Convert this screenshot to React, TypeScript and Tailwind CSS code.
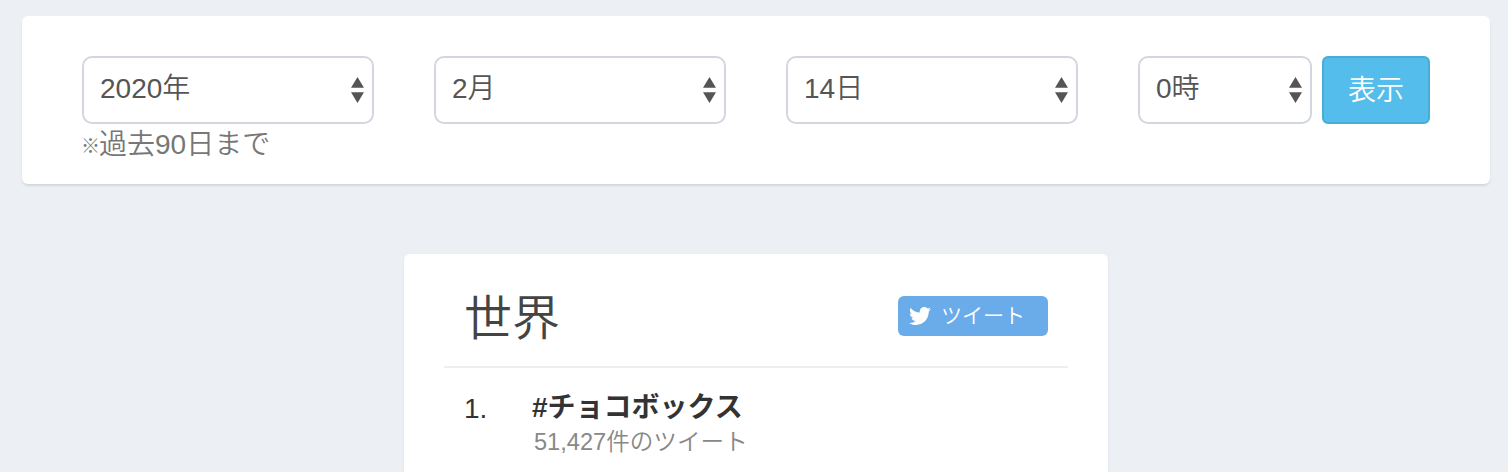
import React from "react";
import { FaTwitter } from "react-icons/fa";

interface DateSelectProps {
  label: string;
  value: string;
  className: string;
}

interface Trend {
  rank: number;
  name: string;
  count: string;
}

const trends: Trend[] = [
  { rank: 1, name: "#チョコボックス", count: "51,427件のツイート" },
];

const DateSelect: React.FC<DateSelectProps> = ({ label, value, className }) => {
  return (
    <div className={`relative h-[68px] ${className}`}>
      <select
        aria-label={label}
        className="block w-full h-full appearance-none rounded-[10px] border-2 border-[#d2d6de] bg-white pl-4 pb-0.5 text-[28px] font-[350] text-[#555]"
      >
        <option>{value}</option>
      </select>
      <svg
        viewBox="0 0 13 26"
        className="absolute right-[10px] top-[21px] w-[13px] h-[26px] fill-[#555] pointer-events-none"
      >
        <path d="M6.5 0L13 10.8H0zM6.5 26L0 15.2H13z" />
      </svg>
    </div>
  );
};

const App: React.FC = () => {
  return (
    <div className="h-[472px] overflow-hidden bg-[#ecf0f5] pt-4 pl-[22px] pr-[18px] font-['Liberation_Sans','Noto_Sans_CJK_JP',sans-serif] font-[350]">
      <div className="h-[168px] rounded-md bg-white px-[60px] pt-10 shadow-[0_2px_2px_rgba(0,0,0,0.1)]">
        <form className="flex">
          <DateSelect label="年" value="2020年" className="w-[292px] mr-[60px]" />
          <DateSelect label="月" value="2月" className="w-[292px] mr-[60px]" />
          <DateSelect label="日" value="14日" className="w-[292px] mr-[60px]" />
          <DateSelect label="時" value="0時" className="w-[174px] mr-2.5" />
          <button
            type="button"
            className="w-[108px] h-[68px] rounded-md border-2 border-[#46aed5] bg-[#54bdeb] pt-0.5 text-[28px] font-[350] text-white"
          >
            表示
          </button>
        </form>
        <p className="flex items-center h-[42px] text-[28px] leading-10 text-[#777]">
          <span className="w-[17px] -ml-px mr-px text-[19px] pt-1 font-bold">※</span>
          <span>過去90日まで</span>
        </p>
      </div>

      <div className="mt-[70px] ml-[382px] w-[704px] h-[260px] rounded-md bg-white px-10 shadow-[0_2px_2px_rgba(0,0,0,0.1)]">
        <div className="flex items-center justify-between h-[114px] border-b-2 border-[#eee] px-5 pt-3">
          <h3 className="text-[48px] leading-[60px] pt-[5px] text-[#444]">世界</h3>
          <a className="flex items-center w-[150px] h-10 rounded-md bg-[#6aabe9] pl-[11px] text-white">
            <FaTwitter className="w-[22px] h-[22px] mr-2.5" />
            <span className="text-[21px] leading-10">ツイート</span>
          </a>
        </div>
        <ul className="px-5 pt-5 text-[#333]">
          {trends.map((trend) => (
            <li key={trend.rank} className="flex">
              <span className="w-[68px] pt-px text-[28px] leading-10">{trend.rank}.</span>
              <div>
                <div className="text-[28px] leading-10 font-bold">{trend.name}</div>
                <div className="pl-0.5 text-[23.6px] leading-7 text-[#888]">{trend.count}</div>
              </div>
            </li>
          ))}
        </ul>
      </div>
    </div>
  );
};

export default App;
